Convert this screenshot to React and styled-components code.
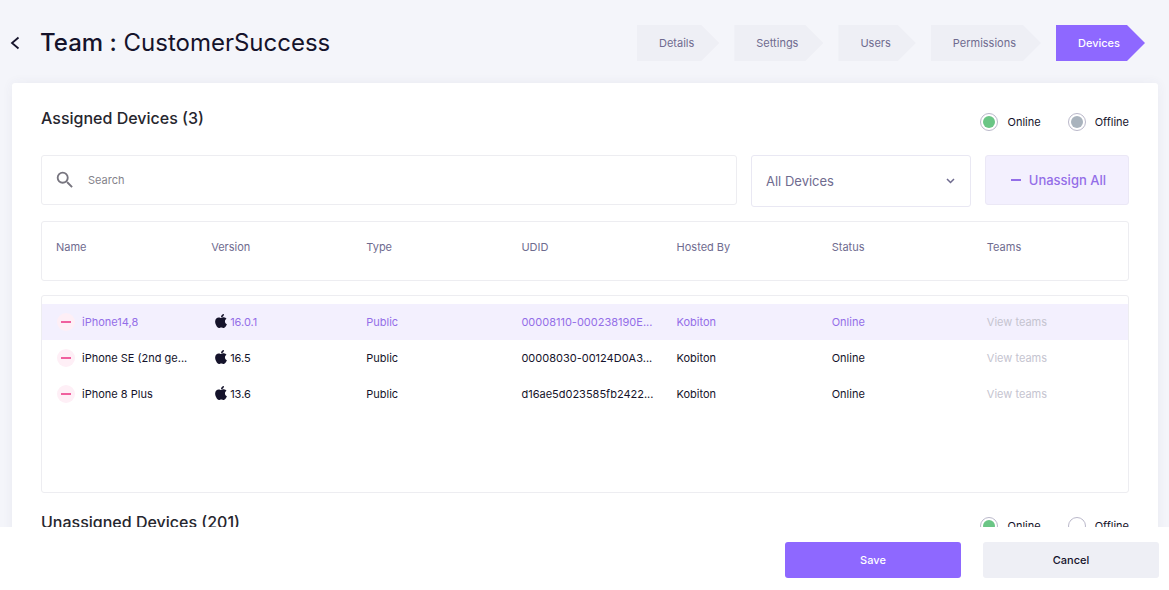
import React, { useState } from 'react';
import styled, { createGlobalStyle } from 'styled-components';
import { FaApple } from 'react-icons/fa';
import { MdSearch } from 'react-icons/md';

const color = {
  page: '#f4f5fa',
  white: '#ffffff',
  grey: '#eeeff5',
  border: '#ededf1',
  ink: '#15132b',
  heading: '#26262e',
  muted: '#6f6b8f',
  faint: '#c5c4d0',
  purple: '#8e68ff',
  violet: '#936ee8',
  lilac: '#f3f0fe',
  pink: '#f0609e',
  blush: '#feeff6',
  green: '#6ac585',
  silver: '#a9b3bd',
};

const steps = ['Details', 'Settings', 'Users', 'Permissions', 'Devices'];

const columns = ['Name', 'Version', 'Type', 'UDID', 'Hosted By', 'Status', 'Teams'];

const devices = [
  { name: 'iPhone14,8', version: '16.0.1', udid: '00008110-000238190E...' },
  { name: 'iPhone SE (2nd ge...', version: '16.5', udid: '00008030-00124D0A3...' },
  { name: 'iPhone 8 Plus', version: '13.6', udid: 'd16ae5d023585fb2422...' },
];

function StatusFilters({ offline }) {
  return (
    <Filters>
      <Filter>
        <Dot type="checkbox" $fill={color.green} defaultChecked />
        Online
      </Filter>
      <Filter>
        <Dot type="checkbox" $fill={color.silver} defaultChecked={offline} />
        Offline
      </Filter>
    </Filters>
  );
}

function DeviceRow({ device, active, onHover }) {
  return (
    <Row $active={active} onMouseEnter={onHover}>
      <Cell>
        <RemoveButton type="button" aria-label={`Unassign ${device.name}`}>
          <Dash />
        </RemoveButton>
        <DeviceName>{device.name}</DeviceName>
      </Cell>
      <Cell>
        <AppleIcon />
        {device.version}
      </Cell>
      <Cell>Public</Cell>
      <Cell>{device.udid}</Cell>
      <Cell>Kobiton</Cell>
      <Cell>Online</Cell>
      <Cell>
        <TeamsLink href="#teams">View teams</TeamsLink>
      </Cell>
    </Row>
  );
}

function App() {
  const [active, setActive] = useState(0);

  return (
    <Layout>
      <GlobalStyle />
      <Main>
        <Header>
          <BackButton type="button" aria-label="Back">
            <svg width="10" height="14" viewBox="0 0 10 14" fill="none">
              <path d="M8.5 1.5 2 7 8.5 12.5" stroke="currentColor" strokeWidth="1.8" />
            </svg>
          </BackButton>
          <Title>
            <strong>Team :</strong> CustomerSuccess
          </Title>
          <Steps>
            {steps.map((step) => (
              <Step key={step} type="button" $active={step === 'Devices'}>
                {step}
              </Step>
            ))}
          </Steps>
        </Header>

        <Panel>
          <SectionHeader>
            <Heading>Assigned Devices (3)</Heading>
            <StatusFilters offline />
          </SectionHeader>

          <Toolbar>
            <SearchBox>
              <MdSearch size={22} />
              <input type="text" placeholder="Search" aria-label="Search devices" />
            </SearchBox>
            <SelectBox>
              <select aria-label="Device filter" defaultValue="all">
                <option value="all">All Devices</option>
              </select>
              <svg width="9" height="6" viewBox="0 0 9 6" fill="none">
                <path d="M1 1 4.5 4.5 8 1" stroke="currentColor" strokeWidth="1.5" />
              </svg>
            </SelectBox>
            <UnassignButton type="button">
              <Dash />
              Unassign All
            </UnassignButton>
          </Toolbar>

          <Table>
            <TableHead>
              <HeadRow>
                {columns.map((column) => (
                  <HeadCell key={column}>{column}</HeadCell>
                ))}
              </HeadRow>
            </TableHead>
            <TableBody>
              {devices.map((device, index) => (
                <DeviceRow
                  key={device.udid}
                  device={device}
                  active={index === active}
                  onHover={() => setActive(index)}
                />
              ))}
            </TableBody>
          </Table>

          <SectionHeader>
            <Heading>Unassigned Devices (201)</Heading>
            <StatusFilters offline={false} />
          </SectionHeader>
        </Panel>
      </Main>

      <Footer>
        <FooterButton type="button" $primary>
          Save
        </FooterButton>
        <FooterButton type="button">Cancel</FooterButton>
      </Footer>
    </Layout>
  );
}

const GlobalStyle = createGlobalStyle`
  * {
    box-sizing: border-box;
  }
  body {
    margin: 0;
    background: ${color.white};
    color: ${color.ink};
    font-family: Inter, sans-serif;
    font-size: 11px;
  }
  button, input, select {
    font-family: inherit;
    font-size: inherit;
  }
  button {
    border: 0;
    padding: 0;
    cursor: pointer;
  }
`;

const Layout = styled.div`
  height: 100vh;
  display: flex;
  flex-direction: column;
`;

const Main = styled.main`
  flex: 1;
  min-height: 0;
  overflow-y: auto;
  scrollbar-width: none;
  background: ${color.page};
`;

const Header = styled.header`
  display: flex;
  align-items: center;
  padding: 25px 24px 22px 10px;
`;

const BackButton = styled.button`
  display: flex;
  width: 30px;
  background: none;
  color: ${color.ink};
`;

const Title = styled.h1`
  margin: 0;
  font-size: 24px;
  line-height: 36px;
  font-weight: 400;
  white-space: nowrap;
  strong {
    font-weight: 500;
  }
`;

const Steps = styled.nav`
  display: flex;
  gap: 15px;
  margin-left: auto;
`;

const Step = styled.button`
  height: 36px;
  padding: 0 25px 0 22px;
  font-weight: ${({ $active }) => ($active ? 500 : 400)};
  color: ${({ $active }) => ($active ? color.white : color.muted)};
  background: ${({ $active }) => ($active ? color.purple : color.grey)};
  clip-path: polygon(0 0, calc(100% - 18px) 0, 100% 50%, calc(100% - 18px) 100%, 0 100%);
`;

const Panel = styled.section`
  margin: 0 11px 0 12px;
  padding: 6px 29px 30px;
  border-radius: 3px;
  background: ${color.white};
  box-shadow: 0 0 12px rgba(60, 60, 110, 0.06);
`;

const SectionHeader = styled.div`
  display: flex;
  justify-content: space-between;
  align-items: flex-start;
  height: 66px;
  padding-top: 17px;
`;

const Heading = styled.h2`
  margin: 0;
  font-size: 16px;
  line-height: 24px;
  font-weight: 500;
  color: ${color.heading};
`;

const Filters = styled.div`
  display: flex;
  gap: 27px;
`;

const Filter = styled.label`
  display: flex;
  align-items: center;
  gap: 9px;
  height: 32px;
  cursor: pointer;
`;

const Dot = styled.input`
  appearance: none;
  width: 18px;
  height: 18px;
  margin: 0;
  padding: 2px;
  border: 1px solid #bab8ca;
  border-radius: 50%;
  background: ${color.white};
  &:checked {
    background: ${({ $fill }) => $fill} content-box;
  }
`;

const Toolbar = styled.div`
  display: flex;
  align-items: flex-start;
  gap: 14px;
`;

const SearchBox = styled.label`
  flex: 1;
  display: flex;
  align-items: center;
  gap: 12px;
  height: 50px;
  padding: 0 12px;
  border: 1px solid ${color.border};
  border-radius: 3px;
  color: #77757f;
  input {
    flex: 1;
    border: 0;
    padding: 0;
    outline: none;
    color: ${color.ink};
  }
  input::placeholder {
    color: #85838b;
  }
`;

const SelectBox = styled.div`
  position: relative;
  width: 220px;
  color: ${color.muted};
  select {
    display: block;
    appearance: none;
    width: 100%;
    height: 52px;
    padding: 0 14px;
    border: 1px solid #e9e8f3;
    border-radius: 3px;
    background: ${color.white};
    color: inherit;
    font-size: 13px;
  }
  svg {
    position: absolute;
    top: 23px;
    right: 16px;
    pointer-events: none;
  }
`;

const Dash = styled.span`
  width: 10px;
  height: 2px;
  background: currentColor;
`;

const UnassignButton = styled.button`
  display: flex;
  align-items: center;
  justify-content: flex-end;
  gap: 8px;
  width: 144px;
  height: 50px;
  padding-right: 22px;
  border: 1px solid #ebe8f6;
  border-radius: 3px;
  background: ${color.lilac};
  color: ${color.violet};
  font-size: 13px;
  font-weight: 500;
`;

const Table = styled.table`
  display: flex;
  flex-direction: column;
  gap: 14px;
  margin-top: 14px;
`;

const TableHead = styled.thead`
  display: block;
  border: 1px solid ${color.border};
  border-radius: 3px;
`;

const TableBody = styled.tbody`
  display: block;
  min-height: 198px;
  padding-top: 8px;
  border: 1px solid ${color.border};
  border-radius: 3px;
`;

const HeadRow = styled.tr`
  display: grid;
  grid-template-columns: repeat(7, 1fr);
  height: 58px;
`;

const HeadCell = styled.th`
  padding: 15px 14px;
  line-height: 20px;
  font-weight: 400;
  text-align: left;
  color: ${color.muted};
`;

const Row = styled.tr`
  display: grid;
  grid-template-columns: repeat(7, 1fr);
  height: 36px;
  color: ${({ $active }) => ($active ? color.violet : color.ink)};
  background: ${({ $active }) => ($active ? color.lilac : color.white)};
`;

const Cell = styled.td`
  display: flex;
  align-items: center;
  padding: 0 0 0 14px;
  white-space: nowrap;
`;

const RemoveButton = styled.button`
  display: flex;
  align-items: center;
  justify-content: center;
  width: 18px;
  height: 18px;
  margin: 0 7px 0 1px;
  border-radius: 50%;
  background: ${color.blush};
  color: ${color.pink};
`;

const DeviceName = styled.span`
  overflow: hidden;
  text-overflow: ellipsis;
`;

const AppleIcon = styled(FaApple)`
  width: 16px;
  height: 16px;
  margin: 0 1px 2px 2px;
  color: ${color.ink};
`;

const TeamsLink = styled.a`
  color: ${color.faint};
  text-decoration: none;
`;

const Footer = styled.footer`
  display: flex;
  justify-content: flex-end;
  gap: 22px;
  padding: 15px 10px 12px;
  background: ${color.white};
`;

const FooterButton = styled.button`
  width: 176px;
  height: 36px;
  border-radius: 3px;
  font-weight: 500;
  color: ${({ $primary }) => ($primary ? color.white : color.ink)};
  background: ${({ $primary }) => ($primary ? color.purple : color.grey)};
`;

export default App;
